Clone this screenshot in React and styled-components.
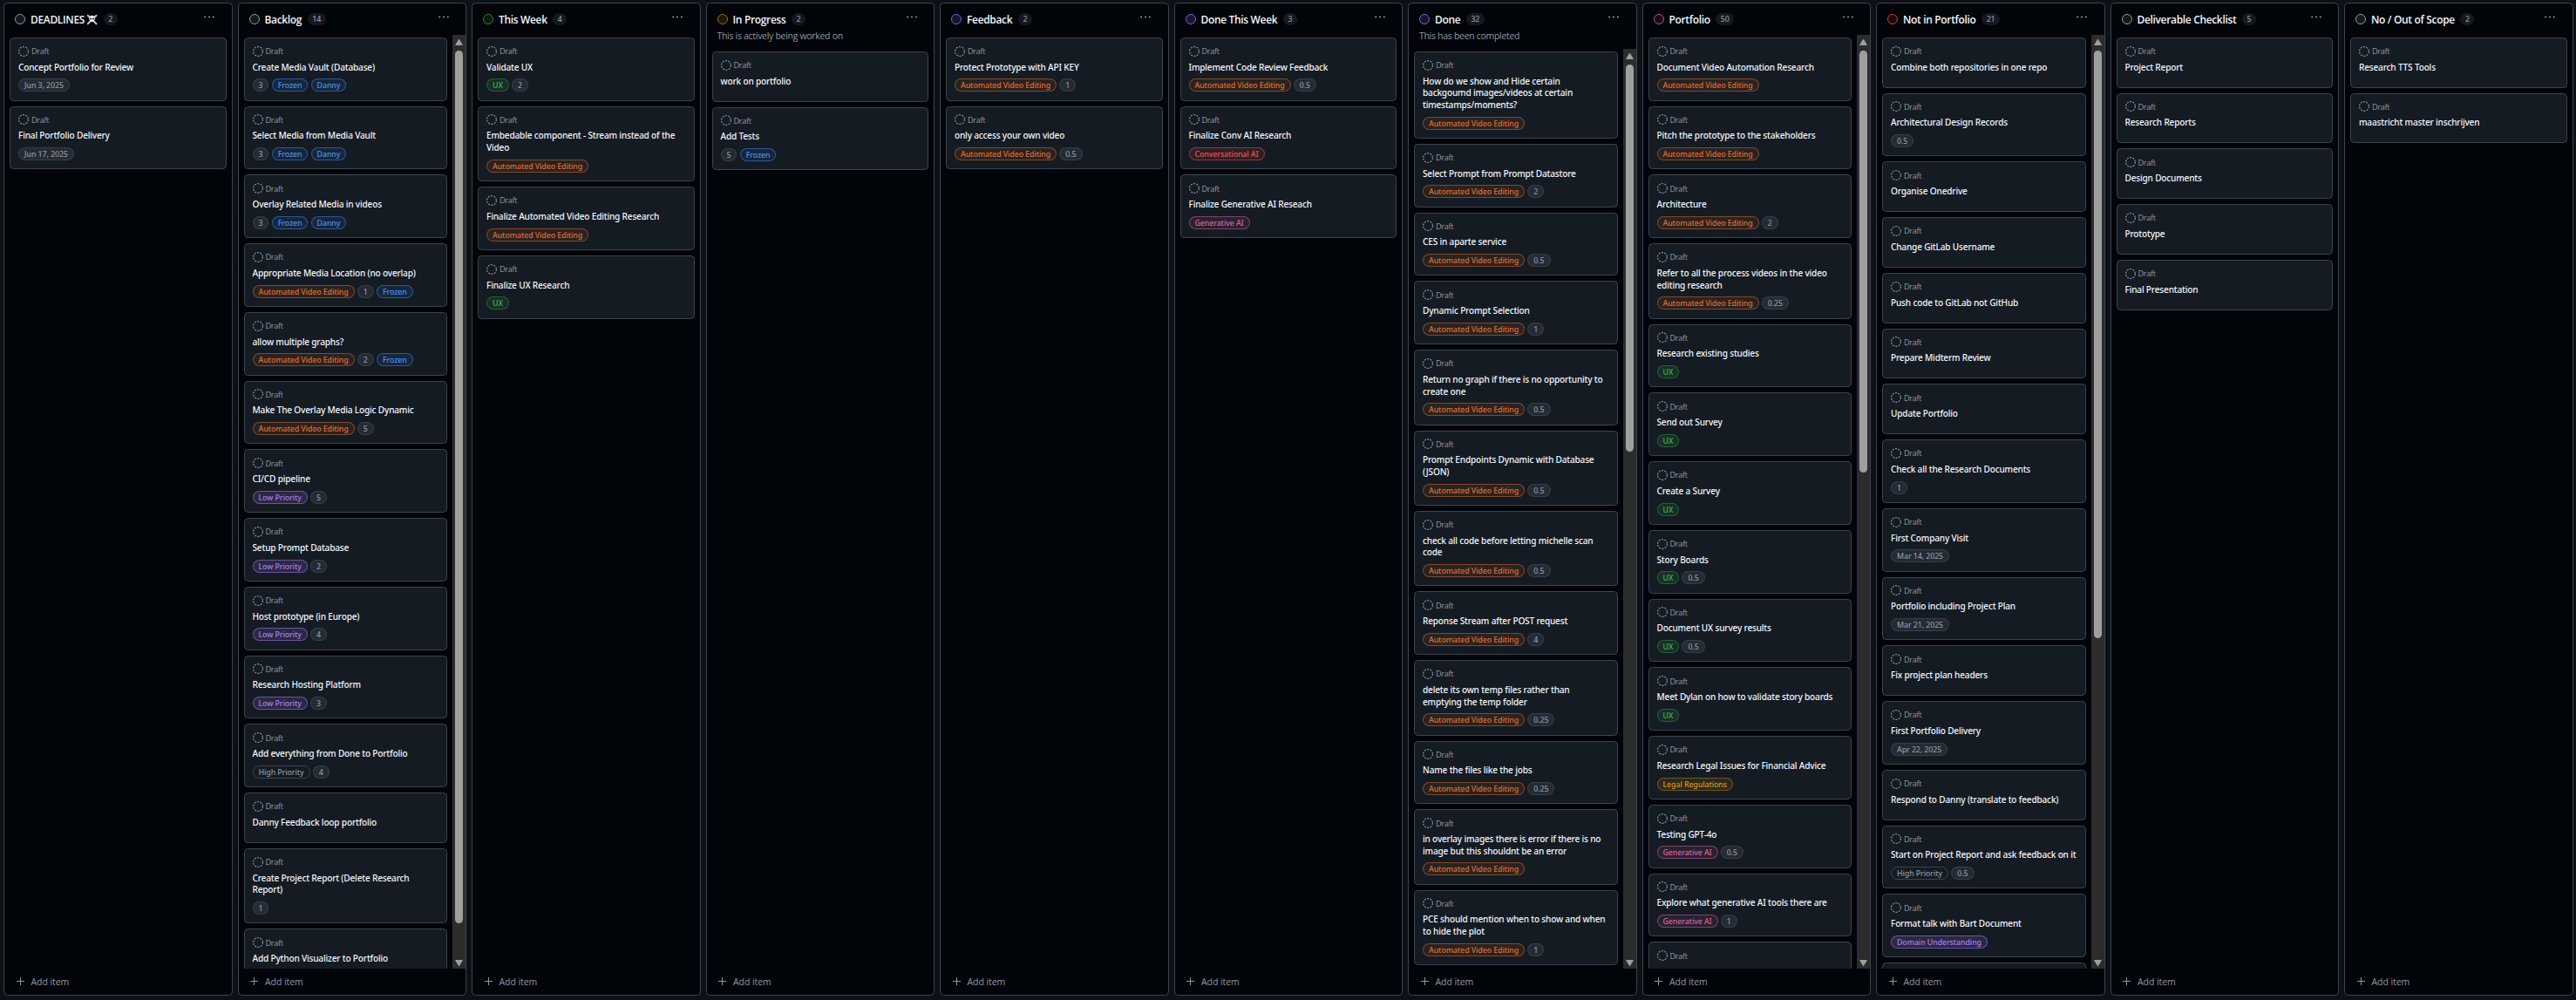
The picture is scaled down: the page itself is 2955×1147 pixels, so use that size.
import React from "react";
import styled, { createGlobalStyle } from "styled-components";

const Global = createGlobalStyle`
  * { box-sizing: border-box; }
  html, body { margin: 0; background: #0d1117; overflow: hidden; }
  body { font-family: "Open Sans", "Noto Sans", sans-serif; color: #f0f6fc; }
`;

const TONES = {
  gray: { fg: "#9198a1", bg: "rgba(101,108,118,0.2)", line: "rgba(101,108,118,0.3)" },
  plain: { fg: "#9198a1", bg: "transparent", line: "#3d444d" },
  blue: { fg: "#4493f8", bg: "rgba(56,139,253,0.1)", line: "rgba(56,139,253,0.5)" },
  green: { fg: "#3fb950", bg: "rgba(46,160,67,0.15)", line: "rgba(46,160,67,0.45)" },
  orange: { fg: "#e56c26", bg: "rgba(219,109,40,0.1)", line: "rgba(219,109,40,0.5)" },
  purple: { fg: "#ab7df8", bg: "rgba(171,125,248,0.15)", line: "rgba(171,125,248,0.5)" },
  pink: { fg: "#db61a2", bg: "rgba(219,97,162,0.1)", line: "rgba(219,97,162,0.5)" },
  red: { fg: "#f85149", bg: "rgba(248,81,73,0.1)", line: "rgba(248,81,73,0.5)" },
  yellow: { fg: "#d29922", bg: "rgba(187,128,9,0.15)", line: "rgba(187,128,9,0.5)" },
};

const DOTS = {
  gray: ["#9198a1", "rgba(101,108,118,0.2)"],
  green: ["#238636", "rgba(46,160,67,0.15)"],
  yellow: ["#9e6a03", "rgba(187,128,9,0.15)"],
  purple: ["#8957e5", "rgba(171,125,248,0.15)"],
  pink: ["#bf4b8a", "rgba(219,97,162,0.1)"],
  red: ["#da3633", "rgba(248,81,73,0.1)"],
};

const Board = styled.main`
  display: flex;
  gap: 6px;
  width: 2955px;
  height: 1147px;
  padding: 3px 0 5.25px 4px;
  overflow: hidden;
`;
const ColumnBox = styled.section`
  display: flex;
  flex-direction: column;
  flex: 0 0 262.5px;
  background: #010409;
  border: 1px solid #3d444d;
  border-radius: 4.5px;
  overflow: hidden;
`;
const Header = styled.header`
  padding: 10.5px 12px 0 12px;
  height: ${(p) => (p.$tall ? 51.85 : 35.85)}px;
  flex: none;
`;
const HeadRow = styled.div`
  display: flex;
  align-items: center;
  height: 15px;
`;
const Dot = styled.span`
  width: 12px;
  height: 12px;
  border-radius: 50%;
  border: 1px solid ${(p) => DOTS[p.$tone][0]};
  background: ${(p) => DOTS[p.$tone][1]};
`;
const Name = styled.h2`
  margin: 0 0 0 6px;
  font-size: 12px;
  line-height: 15px;
  font-weight: 600;
  letter-spacing: -0.34px;
  white-space: nowrap;
  display: flex;
  align-items: center;
  gap: 2px;
`;
const Count = styled.span`
  margin-left: 6.6px;
  height: 14px;
  min-width: 16px;
  padding: 0 5.5px;
  border-radius: 12px;
  background: #15191f;
  color: #9198a1;
  font-family: "Noto Sans", sans-serif;
  font-size: 8.8px;
  font-weight: 500;
  line-height: 14px;
  letter-spacing: -0.1px;
  text-align: center;
`;
const More = styled.svg`
  margin: -5px 7.5px 0 auto;
`;
const Description = styled.p`
  margin: 4px 0 0;
  font-size: 10.5px;
  line-height: 15px;
  letter-spacing: -0.3px;
  color: #9198a1;
`;
const Body = styled.div`
  display: flex;
  flex: 1 1 0;
  min-height: 0;
`;
const List = styled.div`
  flex: 1;
  min-width: 0;
  padding: 3px 6px;
  display: flex;
  flex-direction: column;
  gap: 6px;
  overflow: hidden;
`;
const CardBox = styled.article`
  flex: none;
  min-height: 57.75px;
  padding: 8.25px 9px 9.25px;
  background: #151b23;
  border: 1px solid #3d444d;
  border-radius: 4.5px;
`;
const Meta = styled.div`
  display: flex;
  align-items: center;
  gap: 3px;
  height: 13px;
  font-size: 9.2px;
  letter-spacing: -0.32px;
  color: #9198a1;
`;
const Title = styled.h3`
  margin: 5.5px 0 0;
  font-family: "Noto Sans", sans-serif;
  font-size: 10.1px;
  line-height: 13.65px;
  font-weight: 500;
  letter-spacing: -0.19px;
  white-space: pre;
`;
const Tags = styled.div`
  display: flex;
  gap: 3.2px;
  margin-top: 6.1px;
`;
const Tag = styled.span`
  height: 15px;
  padding: 0 6px;
  border-radius: 8px;
  border: 1px solid ${(p) => TONES[p.$tone].line};
  background: ${(p) => TONES[p.$tone].bg};
  color: ${(p) => TONES[p.$tone].fg};
  font-family: "Noto Sans", sans-serif;
  font-size: 8.8px;
  font-weight: 500;
  line-height: 14px;
  letter-spacing: -0.08px;
  white-space: nowrap;
`;
const Track = styled.div`
  flex: 0 0 15px;
  display: flex;
  flex-direction: column;
  align-items: center;
  justify-content: space-between;
  padding: 5px 0 3px;
  background: #2c2c2c;
`;
const Thumb = styled.div`
  width: 9px;
  height: ${(p) => p.$size}px;
  margin: 6px 0 auto;
  border-radius: 4.5px;
  background: #9f9f9f;
`;
const Footer = styled.footer`
  flex: none;
  display: flex;
  align-items: center;
  gap: 8px;
  height: 30px;
  padding: 0 0 0 13.5px;
  color: #9198a1;
  font-size: 10.5px;
  letter-spacing: -0.06px;
`;

const DraftIcon = () => (
  <svg width="12" height="12" viewBox="0 0 12 12" fill="none" stroke="#9198a1">
    <circle cx="6" cy="6" r="5.4" strokeWidth="1.1" strokeDasharray="2.1 1.293" />
  </svg>
);
const Skull = () => (
  <svg width="13" height="13" viewBox="0 0 13 13">
    <path d="M1.8 1.8 11.5 11.2M11.5 1.8 1.8 11.2" stroke="#cdbfd8" strokeWidth="2" strokeLinecap="round" />
    <path d="M6.600 1.700c2.200 0 3.500 1.300 3.500 3.300 0 1.300-.5 2-1.300 2.500v1.600H4.400V7.500C3.600 7 3.100 6.300 3.100 5c0-2 1.300-3.300 3.500-3.300z" fill="#f1eaf5" />
    <circle cx="5.100" cy="5.400" r="1" fill="#1b1622" />
    <circle cx="8.100" cy="5.400" r="1" fill="#1b1622" />
  </svg>
);

const AVE = ["Automated Video Editing", "orange"];
const FROZEN = ["Frozen", "blue"];
const DANNY = ["Danny", "blue"];
const LOW = ["Low Priority", "purple"];
const HIGH = ["High Priority", "plain"];
const UX = ["UX", "green"];
const GEN = ["Generative AI", "pink"];
const n = (v) => [v, "gray"];

const COLUMNS = [
  { name: "DEADLINES", skull: true, tone: "gray", count: 2, cards: [
    ["Concept Portfolio for Review", n("Jun 3, 2025")],
    ["Final Portfolio Delivery", n("Jun 17, 2025")],
  ] },
  { name: "Backlog", tone: "gray", count: 14, thumb: 1001, cards: [
    ["Create Media Vault (Database)", n("3"), FROZEN, DANNY],
    ["Select Media from Media Vault", n("3"), FROZEN, DANNY],
    ["Overlay Related Media in videos", n("3"), FROZEN, DANNY],
    ["Appropriate Media Location (no overlap)", AVE, n("1"), FROZEN],
    ["allow multiple graphs?", AVE, n("2"), FROZEN],
    ["Make The Overlay Media Logic Dynamic", AVE, n("5")],
    ["CI/CD pipeline", LOW, n("5")],
    ["Setup Prompt Database", LOW, n("2")],
    ["Host prototype (in Europe)", LOW, n("4")],
    ["Research Hosting Platform", LOW, n("3")],
    ["Add everything from Done to Portfolio", HIGH, n("4")],
    ["Danny Feedback loop portfolio"],
    ["Create Project Report (Delete Research\nReport)", n("1")],
    ["Add Python Visualizer to Portfolio"],
  ] },
  { name: "This Week", tone: "green", count: 4, cards: [
    ["Validate UX", UX, n("2")],
    ["Embedable component - Stream instead of the\nVideo", AVE],
    ["Finalize Automated Video Editing Research", AVE],
    ["Finalize UX Research", UX],
  ] },
  { name: "In Progress", tone: "yellow", count: 2, text: "This is actively being worked on", cards: [
    ["work on portfolio"],
    ["Add Tests", n("5"), FROZEN],
  ] },
  { name: "Feedback", tone: "purple", count: 2, cards: [
    ["Protect Prototype with API KEY", AVE, n("1")],
    ["only access your own video", AVE, n("0.5")],
  ] },
  { name: "Done This Week", tone: "purple", count: 3, cards: [
    ["Implement Code Review Feedback", AVE, n("0.5")],
    ["Finalize Conv AI Research", ["Conversational AI", "red"]],
    ["Finalize Generative AI Reseach", GEN],
  ] },
  { name: "Done", tone: "purple", count: 32, text: "This has been completed", thumb: 444, cards: [
    ["How do we show and Hide certain\nbackgoumd images/videos at certain\ntimestamps/moments?", AVE],
    ["Select Prompt from Prompt Datastore", AVE, n("2")],
    ["CES in aparte service", AVE, n("0.5")],
    ["Dynamic Prompt Selection", AVE, n("1")],
    ["Return no graph if there is no opportunity to\ncreate one", AVE, n("0.5")],
    ["Prompt Endpoints Dynamic with Database\n(JSON)", AVE, n("0.5")],
    ["check all code before letting michelle scan\ncode", AVE, n("0.5")],
    ["Reponse Stream after POST request", AVE, n("4")],
    ["delete its own temp files rather than\nemptying the temp folder", AVE, n("0.25")],
    ["Name the files like the jobs", AVE, n("0.25")],
    ["in overlay images there is error if there is no\nimage but this shouldnt be an error", AVE],
    ["PCE should mention when to show and when\nto hide the plot", AVE, n("1")],
  ] },
  { name: "Portfolio", tone: "pink", count: 50, thumb: 484, cards: [
    ["Document Video Automation Research", AVE],
    ["Pitch the prototype to the stakeholders", AVE],
    ["Architecture", AVE, n("2")],
    ["Refer to all the process videos in the video\nediting research", AVE, n("0.25")],
    ["Research existing studies", UX],
    ["Send out Survey", UX],
    ["Create a Survey", UX],
    ["Story Boards", UX, n("0.5")],
    ["Document UX survey results", UX, n("0.5")],
    ["Meet Dylan on how to validate story boards", UX],
    ["Research Legal Issues for Financial Advice", ["Legal Regulations", "yellow"]],
    ["Testing GPT-4o", GEN, n("0.5")],
    ["Explore what generative AI tools there are", GEN, n("1")],
    [""],
  ] },
  { name: "Not in Portfolio", tone: "red", count: 21, thumb: 674, cards: [
    ["Combine both repositories in one repo"],
    ["Architectural Design Records", n("0.5")],
    ["Organise Onedrive"],
    ["Change GitLab Username"],
    ["Push code to GitLab not GitHub"],
    ["Prepare Midterm Review"],
    ["Update Portfolio"],
    ["Check all the Research Documents", n("1")],
    ["First Company Visit", n("Mar 14, 2025")],
    ["Portfolio including Project Plan", n("Mar 21, 2025")],
    ["Fix project plan headers"],
    ["First Portfolio Delivery", n("Apr 22, 2025")],
    ["Respond to Danny (translate to feedback)"],
    ["Start on Project Report and ask feedback on it", HIGH, n("0.5")],
    ["Format talk with Bart Document", ["Domain Understanding", "purple"]],
    null,
  ] },
  { name: "Deliverable Checklist", tone: "gray", count: 5, cards: [
    ["Project Report"], ["Research Reports"], ["Design Documents"], ["Prototype"], ["Final Presentation"],
  ] },
  { name: "No / Out of Scope", tone: "gray", count: 2, cards: [
    ["Research TTS Tools"], ["maastricht master inschrijven"],
  ] },
];

const Card = ({ data }) => {
  if (!data) return <CardBox />;
  const [title, ...tags] = data;
  return (
    <CardBox>
      <Meta><DraftIcon />Draft</Meta>
      <Title>{title}</Title>
      {tags.length > 0 && (
        <Tags>{tags.map(([label, tone]) => <Tag key={label} $tone={tone}>{label}</Tag>)}</Tags>
      )}
    </CardBox>
  );
};

const Arrow = ({ down }) => (
  <svg width="9" height="7" viewBox="0 0 9 7" fill="#9f9f9f">
    <path d={down ? "M.8 0h7.400q.8 0 .5.800L5.200 6.500q-.7 1-1.400 0L.3.800Q0 0 .8 0z" : "M.8 7h7.400q.8 0 .5-.800L5.200.5q-.7-1-1.400 0L.3 6.200Q0 7 .8 7z"} />
  </svg>
);

const Column = ({ col }) => (
  <ColumnBox>
    <Header $tall={!!col.text}>
      <HeadRow>
        <Dot $tone={col.tone} />
        <Name>{col.name}{col.skull && <Skull />}</Name>
        <Count>{col.count}</Count>
        <More width="12" height="3" viewBox="0 0 12 3" fill="#9198a1">
          <circle cx="1.2" cy="1.500" r="1" /><circle cx="6" cy="1.500" r="1" /><circle cx="10.800" cy="1.500" r="1" />
        </More>
      </HeadRow>
      {col.text && <Description>{col.text}</Description>}
    </Header>
    <Body>
      <List>{col.cards.map((c, i) => <Card key={i} data={c} />)}</List>
      {col.thumb && <Track><Arrow /><Thumb $size={col.thumb} /><Arrow down /></Track>}
    </Body>
    <Footer>
      <svg width="9" height="9" viewBox="0 0 9 9" stroke="#9198a1"><path d="M4.500 0v9M0 4.500h9" /></svg>
      Add item
    </Footer>
  </ColumnBox>
);

export default function App() {
  return (
    <>
      <Global />
      <Board>{COLUMNS.map((c) => <Column key={c.name} col={c} />)}</Board>
    </>
  );
}
